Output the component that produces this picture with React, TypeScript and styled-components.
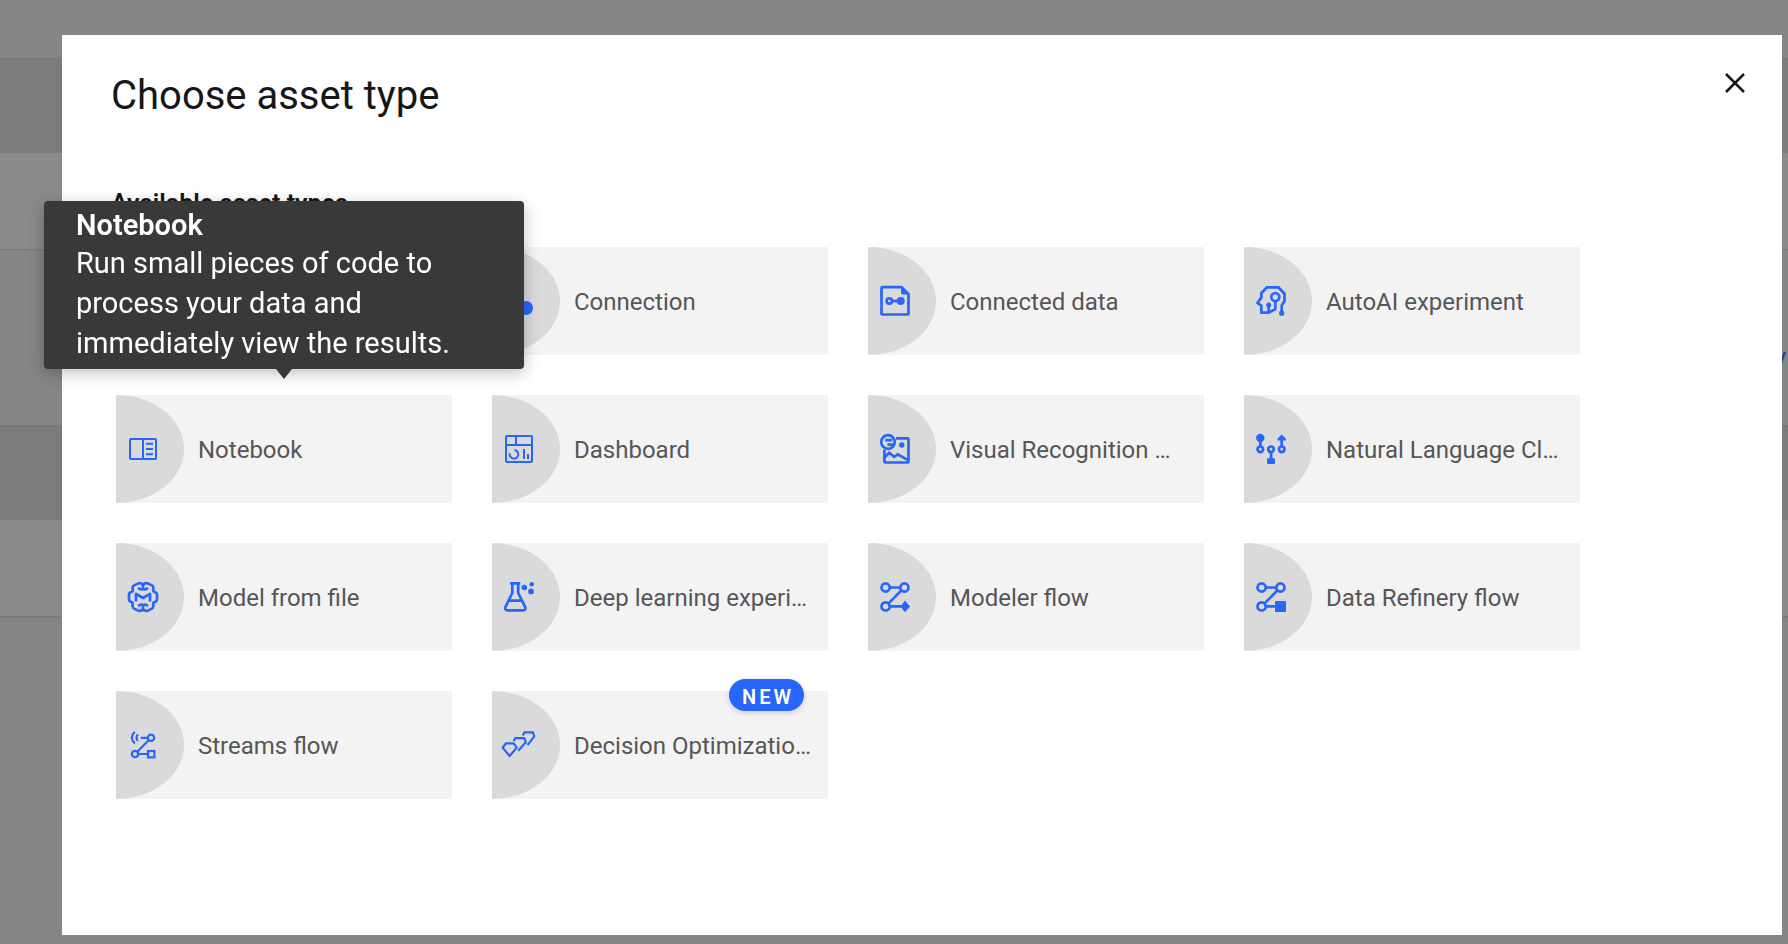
import React from 'react';
import styled, { createGlobalStyle } from 'styled-components';

const blue = '#2865fb';

const GlobalStyle = createGlobalStyle`
  *, *::before, *::after { box-sizing: border-box; }
  body {
    margin: 0;
    background: #f3f3f3;
    color: #171717;
    font-family: Roboto, "Liberation Sans", sans-serif;
  }
  button { font: inherit; border: 0; padding: 0; cursor: pointer; }
`;

/* ---------- Project page under the dialog ---------- */

const ProjectPage = styled.div`
  min-height: 100vh;
  padding-top: 58px;
`;

const SectionBar = styled.div`
  height: 95px;
  background: #dedede;
`;

const SectionRow = styled.div`
  height: 98px;
  background: #fdfdfd;
  border-bottom: 2px solid #e0e0e0;
`;

const SectionBody = styled.div`
  display: flex;
  justify-content: flex-end;
  align-items: flex-start;
  height: 174px;
  padding: 90px 2px 0;
`;

const PageLink = styled.a`
  color: ${blue};
  font-size: 24px;
  line-height: 32px;
  text-decoration: none;
`;

/* ---------- Dialog ---------- */

const Overlay = styled.div`
  position: fixed;
  inset: 0;
  display: flex;
  padding: 35px 6px 9px 62px;
  background: rgba(23, 23, 23, 0.5);
`;

const Dialog = styled.section`
  flex: 1;
  padding: 24px 23px 24px 49px;
  background: #fff;
`;

const DialogHeader = styled.header`
  display: flex;
  justify-content: space-between;
  align-items: flex-start;
`;

const Title = styled.h1`
  margin: 13px 0 0;
  font-size: 40px;
  line-height: 48px;
  font-weight: 400;
`;

const CloseButton = styled.button`
  display: grid;
  place-items: center;
  width: 48px;
  height: 48px;
  background: none;
  color: #171717;
`;

const SectionHeading = styled.h2`
  margin: 68px 0 27px;
  font-size: 25px;
  line-height: 32px;
  font-weight: 600;
`;

const TileGrid = styled.ul`
  display: grid;
  grid-template-columns: repeat(auto-fill, 336px);
  gap: 40px;
  margin: 0;
  padding: 0 0 0 5px;
  list-style: none;
`;

const TileItem = styled.li`
  position: relative;
`;

const Tile = styled.button`
  display: flex;
  align-items: center;
  width: 100%;
  height: 108px;
  padding-right: 14px;
  background: #f3f3f3;
  color: #565656;
  text-align: left;
`;

const IconPlate = styled.span`
  flex: none;
  display: flex;
  align-items: center;
  width: 68px;
  height: 108px;
  padding-left: 11px;
  margin-right: 14px;
  background: #dadada;
  border-radius: 0 100% 100% 0 / 0 50% 50% 0;
`;

const TileLabel = styled.span`
  flex: 1;
  overflow: hidden;
  padding-top: 2px;
  font-size: 24px;
  line-height: 32px;
  text-overflow: ellipsis;
  white-space: nowrap;
`;

const Badge = styled.span`
  position: absolute;
  top: -12px;
  right: 24px;
  height: 32px;
  padding: 2px 10px 0 13px;
  border-radius: 16px;
  background: ${blue};
  box-shadow: 0 2px 6px rgba(0, 0, 0, 0.15);
  color: #fff;
  font-size: 20px;
  line-height: 32px;
  font-weight: 600;
  letter-spacing: 3px;
`;

const Tooltip = styled.div`
  position: absolute;
  z-index: 1;
  bottom: calc(100% + 26px);
  left: 50%;
  width: 480px;
  margin-left: -240px;
  padding: 6px 32px;
  border-radius: 4px;
  background: #393939;
  box-shadow: 0 4px 16px rgba(0, 0, 0, 0.25);
  color: #fff;
  font-size: 29px;

  &::after {
    content: '';
    position: absolute;
    top: 100%;
    left: 50%;
    margin-left: -8px;
    border: 8px solid transparent;
    border-top: 10px solid #393939;
    border-bottom: 0;
  }
`;

const TooltipTitle = styled.strong`
  display: block;
  line-height: 36px;
  font-weight: 600;
`;

const TooltipText = styled.p`
  margin: 0;
  line-height: 40px;
`;

const Glyph = styled.svg`
  display: block;
  width: 32px;
  height: 32px;
  overflow: visible;
  fill: none;
  stroke: ${blue};
  stroke-width: 2.7;

  .solid { fill: ${blue}; stroke: none; }
  .thin { stroke-width: 2.2; }
  .crisp { stroke-width: 2; }
`;

/* ---------- Icons, all on a 32 x 32 board ---------- */

const icons: Record<string, React.ReactNode> = {
  data: (
    <>
      <path d="M3 2.2H22L29.5 9.5V29.5H3z" />
      <path d="M9 14h14M9 20h14" />
    </>
  ),
  connection: (
    <>
      <circle cx="7" cy="23" r="5" />
      <path d="M12 23h8" />
      <circle className="solid" cx="23" cy="23" r="7" />
    </>
  ),
  connectedData: (
    <>
      <path d="M3.5 2.2H22.5L29.5 9V28.5a1 1 0 0 1-1 1H3.5a1 1 0 0 1-1-1V3.2a1 1 0 0 1 1-1z" />
      <path className="solid" d="M22 1L30.7 9.5H24a2 2 0 0 1-2-2z" />
      <circle cx="10.3" cy="16" r="2.7" />
      <path d="M13 16h6" />
      <circle className="solid" cx="21.7" cy="16" r="4" />
    </>
  ),
  autoAi: (
    <>
      <path d="M26.7 28V20.5L29.5 16V8.7L23.3 2.3H12L6.3 8.3V12.6L2.5 18L6.3 20.7V27.7H13.7L20.3 24V16" strokeLinejoin="round" />
      <circle cx="20.3" cy="12" r="4" />
      <path d="M13.7 20v7.7" />
      <circle className="solid" cx="13.7" cy="20" r="2.5" />
      <circle className="solid" cx="26.7" cy="28.2" r="2.6" />
    </>
  ),
  notebook: (
    <g className="crisp">
      <rect x="3" y="6" width="26" height="20" rx="1" />
      <path d="M16 6v20M19 10.8h7M19 16h7M19 21.2h7" />
    </g>
  ),
  dashboard: (
    <g className="crisp">
      <rect x="3" y="3" width="26" height="26" rx="1" />
      <path d="M3 12H29M13 3v9M21 16v10M25 21v5M6.8 20.2A4.3 4.3 0 1 0 11.4 17" />
    </g>
  ),
  visualRecognition: (
    <>
      <circle cx="9" cy="9" r="6.8" />
      <path d="M17 5.4H28.5a1 1 0 0 1 1 1V28.5a1 1 0 0 1-1 1H6.4a1 1 0 0 1-1-1V16.5" />
      <path d="M6.3 7.2h7M8.5 11.6h7M5.5 24.3L10.3 19.9L15.3 23.9L18.7 21.4L29.5 27.4" />
      <circle className="solid" cx="22.8" cy="12" r="2.7" />
    </>
  ),
  languageClassifier: (
    <>
      <path d="M5.3 5v8.5M26.7 5v8.5M16 19v8" />
      <circle cx="5.3" cy="16.3" r="2.8" />
      <circle cx="16" cy="16.3" r="2.8" />
      <circle cx="26.7" cy="16.3" r="2.8" />
      <circle className="solid" cx="5.3" cy="5" r="4.2" />
      <path className="solid" d="M26.7 1.6L30.9 5.8V7.4H22.5V5.8z" />
      <rect className="solid" x="12" y="25.2" width="8" height="5.7" rx="1" />
    </>
  ),
  model: (
    <g strokeLinejoin="round">
      <path d="M16 3.6C14.5 2.2 12.6 1.8 10.8 2.6L7 4.4C5.9 5 5.6 6 5.6 7.2V10.4L2.9 11.7C2.2 12.2 2 12.9 2 13.7V18.3C2 19.1 2.2 19.8 2.9 20.3L5.6 21.6V24.8C5.6 26 5.9 27 7 27.6L10.8 29.4C12.6 30.2 14.5 29.8 16 28.4C17.5 29.8 19.4 30.2 21.2 29.4L25 27.6C26.1 27 26.4 26 26.4 24.8V21.6L29.1 20.3C29.8 19.8 30 19.1 30 18.3V13.7C30 12.9 29.8 12.2 29.1 11.7L26.4 10.4V7.2C26.4 6 26.1 5 25 4.4L21.2 2.6C19.4 1.8 17.5 2.2 16 3.6z" />
      <path d="M16 3.6V8M11 7Q13.5 9 16 8Q18.5 9 21 7M16 28.4V24M11 25Q13.5 23 16 24Q18.5 23 21 25" />
      <path d="M9 20.5V12.8L16 17L23 12.8V20.5" />
    </g>
  ),
  flask: (
    <>
      <path d="M7 2.3H17.3M9.3 2.3V12L2.6 25.6C1.6 27.8 2.6 29.4 4.8 29.4H19.8C22 29.4 23 27.8 22 25.6L15.2 12V2.3M6 19.7H18.7" />
      <circle className="solid" cx="21.3" cy="6.5" r="2.8" />
      <circle className="solid" cx="28.7" cy="3.2" r="2.2" />
      <circle className="solid" cx="28" cy="10.4" r="2.9" />
    </>
  ),
  modeler: (
    <>
      <circle cx="6.6" cy="6.5" r="4.1" />
      <circle cx="25.4" cy="6.5" r="4.1" />
      <circle cx="6.6" cy="25.4" r="4.1" />
      <path d="M10.8 6.5H21.2M22.4 9.4L9.6 22.4M10.8 25.4H24" />
      <path className="solid" d="M26 19.6L31 25.4L26 31.2L21.4 25.4z" />
    </>
  ),
  refinery: (
    <>
      <circle cx="6.6" cy="6.5" r="4.1" />
      <circle cx="25.4" cy="6.5" r="4.1" />
      <circle cx="6.6" cy="25.4" r="4.1" />
      <path d="M10.8 6.5H21.2M22.4 9.4L9.6 22.4M10.8 25.4H22" />
      <rect className="solid" x="20" y="20" width="11" height="11" rx="1" />
    </>
  ),
  streams: (
    <g className="thin">
      <circle cx="24" cy="8.8" r="3.2" />
      <circle cx="8" cy="25" r="3.2" />
      <rect x="21" y="22" width="6.4" height="6.4" />
      <path d="M13.7 8.8H20.8M21.7 11.2L10.3 22.7M11.2 25H21M7.8 2.7Q1.8 8.6 7.8 14.4M10.8 5.4Q8.4 8.6 10.8 11.8" />
    </g>
  ),
  decision: (
    <g className="thin" strokeLinejoin="round">
      <path d="M3 14.3H10.6L13.8 18.6L6.6 27L-.4 18.6z" />
      <path d="M10.6 12.2L12.2 9.2H21.4L22.8 13.2L15.2 21.7" />
      <path d="M19.8 6.6L21.4 3.4H30L31.3 7.4L24.6 16" />
    </g>
  ),
};

type Asset = { icon: string; label: string; isNew?: boolean; hint?: string };

const assets: Asset[] = [
  { icon: 'data', label: 'Data' },
  { icon: 'connection', label: 'Connection' },
  { icon: 'connectedData', label: 'Connected data' },
  { icon: 'autoAi', label: 'AutoAI experiment' },
  {
    icon: 'notebook',
    label: 'Notebook',
    hint: 'Run small pieces of code to process your data and immediately view the results.',
  },
  { icon: 'dashboard', label: 'Dashboard' },
  { icon: 'visualRecognition', label: 'Visual Recognition model' },
  { icon: 'languageClassifier', label: 'Natural Language Classifier model' },
  { icon: 'model', label: 'Model from file' },
  { icon: 'flask', label: 'Deep learning experiment' },
  { icon: 'modeler', label: 'Modeler flow' },
  { icon: 'refinery', label: 'Data Refinery flow' },
  { icon: 'streams', label: 'Streams flow' },
  { icon: 'decision', label: 'Decision Optimization experiment', isNew: true },
];

function AssetTile({ icon, label, isNew, hint }: Asset) {
  return (
    <TileItem>
      <Tile type="button" aria-describedby={hint ? 'asset-hint' : undefined}>
        <IconPlate>
          <Glyph viewBox="0 0 32 32" aria-hidden="true">{icons[icon]}</Glyph>
        </IconPlate>
        <TileLabel>{label}</TileLabel>
      </Tile>
      {isNew && <Badge>NEW</Badge>}
      {hint && (
        <Tooltip role="tooltip" id="asset-hint">
          <TooltipTitle>{label}</TooltipTitle>
          <TooltipText>{hint}</TooltipText>
        </Tooltip>
      )}
    </TileItem>
  );
}

export default function App() {
  return (
    <>
      <GlobalStyle />
      <ProjectPage aria-hidden="true">
        <SectionBar />
        <SectionRow />
        <SectionBody>
          <PageLink href="#" tabIndex={-1}>Try</PageLink>
        </SectionBody>
        <SectionBar />
        <SectionRow />
      </ProjectPage>
      <Overlay>
        <Dialog role="dialog" aria-modal="true" aria-labelledby="dialog-title">
          <DialogHeader>
            <Title id="dialog-title">Choose asset type</Title>
            <CloseButton type="button" aria-label="Close">
              <svg width="20" height="20" viewBox="0 0 20 20" fill="none" stroke="currentColor" strokeWidth="2.5">
                <path d="M1 1L19 19M19 1L1 19" />
              </svg>
            </CloseButton>
          </DialogHeader>
          <SectionHeading>Available asset types</SectionHeading>
          <TileGrid>
            {assets.map((asset) => (
              <AssetTile key={asset.label} {...asset} />
            ))}
          </TileGrid>
        </Dialog>
      </Overlay>
    </>
  );
}
